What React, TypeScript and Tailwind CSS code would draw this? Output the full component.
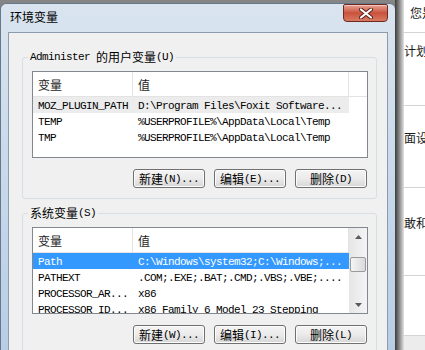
import type { ReactNode } from "react";

const userVars: [string, string][] = [
  ["MOZ_PLUGIN_PATH", "D:\\Program Files\\Foxit Software..."],
  ["TEMP", "%USERPROFILE%\\AppData\\Local\\Temp"],
  ["TMP", "%USERPROFILE%\\AppData\\Local\\Temp"],
];

const sysVars: [string, string][] = [
  ["Path", "C:\\Windows\\system32;C:\\Windows;..."],
  ["PATHEXT", ".COM;.EXE;.BAT;.CMD;.VBS;.VBE;...."],
  ["PROCESSOR_AR...", "x86"],
  ["PROCESSOR_ID...", "x86 Family 6 Model 23 Stepping"],
];

// SimSun-like half-width latin run (6px advance)
function Lt({ children }: { children: ReactNode }) {
  return (
    <span className="font-['Liberation_Mono',monospace] text-[11px] tracking-[-0.6px]">
      {children}
    </span>
  );
}

function Arrow({ up }: { up?: boolean }) {
  return (
    <svg width="7" height="4" viewBox="0 0 7 4">
      <path d={up ? "M0 4 L3.5 0 L7 4 Z" : "M0 0 L3.5 4 L7 0 Z"} fill="#5a5a5a" />
    </svg>
  );
}

function ScrollBar() {
  return (
    <div className="flex w-[18px] shrink-0 flex-col bg-gradient-to-r from-[#e6e6e6] to-[#f4f4f4]">
      <div className="flex h-[17px] items-center justify-center">
        <Arrow up />
      </div>
      <div className="flex-1 px-[1px]">
        <div className="mt-[12px] h-[15px] rounded-[2px] border border-[#9a9a9a] bg-gradient-to-r from-[#f5f5f5] to-[#d9d9d9]" />
      </div>
      <div className="flex h-[17px] items-center justify-center">
        <Arrow />
      </div>
    </div>
  );
}

function ListView({
  rows,
  selected,
  focused,
  scroll,
}: {
  rows: [string, string][];
  selected: number;
  focused?: boolean;
  scroll?: boolean;
}) {
  return (
    <div className="flex h-[87px] overflow-hidden border border-[#828790] bg-white">
      <div className="flex min-w-0 flex-1 flex-col">
        <div className="flex h-[25px] shrink-0 border-b border-[#e3e3e3] text-[#1e1e1e]">
          <div className="flex w-[100px] items-center border-r border-[#e3e3e3] pl-[5px] pt-[1px]">变量</div>
          <div className="flex w-[216px] items-center border-r border-[#e3e3e3] pl-[5px] pt-[1px]">值</div>
          <div className="flex-1" />
        </div>
        {rows.map(([name, value], i) => (
          <div
            key={name}
            className={
              "flex h-[16px] w-[316px] shrink-0 items-center whitespace-nowrap leading-[16px] " +
              (i === selected ? (focused ? "bg-[#3399ff] text-white" : "bg-[#ececec] text-black") : "text-black")
            }
          >
            <div className="w-[100px] overflow-hidden pl-[5px]">
              <Lt>{name}</Lt>
            </div>
            <div className="w-[216px] overflow-hidden pl-[5px]">
              <Lt>{value}</Lt>
            </div>
          </div>
        ))}
      </div>
      {scroll && <ScrollBar />}
    </div>
  );
}

function Btn({ label, key1, dots = true }: { label: string; key1: string; dots?: boolean }) {
  return (
    <button className="flex h-[19px] w-[72px] items-center justify-center rounded-[3px] border border-[#707070] bg-gradient-to-b from-[#f4f4f4] via-[#ebebeb] to-[#d6d6d6] leading-[16px] text-black shadow-[inset_0_0_0_1px_#fcfcfc]">
      {label}
      <Lt>
        ({key1}){dots ? "..." : ""}
      </Lt>
    </button>
  );
}

function Group({
  title,
  latin,
  keyChar,
  className,
  children,
}: {
  title: string;
  latin?: string;
  keyChar: string;
  className?: string;
  children: ReactNode;
}) {
  return (
    <fieldset className={"rounded-[3px] border border-[#d5dfe5] pb-[10px] pl-[9px] pr-[8px] pt-[6px] " + (className ?? "")}>
      <legend className="ml-[-4px] flex h-[16px] items-center whitespace-pre px-[2px] leading-[16px] text-black">
        {latin && <Lt>{latin}</Lt>}
        <span>{title}</span>
        <Lt>({keyChar})</Lt>
      </legend>
      {children}
    </fieldset>
  );
}

function CloseButton() {
  return (
    <div className="flex h-[18px] w-[45px] items-center justify-center rounded-b-[4px] rounded-t-[2px] border border-[#6e2a20] bg-gradient-to-b from-[#e8a395] via-[#c9513c] to-[#d77b62] shadow-[inset_0_1px_0_#f3c6bc]">
      <svg width="14" height="11" viewBox="0 0 14 11">
        <path d="M2 1.5 L12 9.5 M12 1.5 L2 9.5" stroke="#5a2018" strokeWidth="4" strokeLinecap="round" />
        <path d="M2 1.5 L12 9.5 M12 1.5 L2 9.5" stroke="#ffffff" strokeWidth="2.2" strokeLinecap="round" />
      </svg>
    </div>
  );
}

export default function App() {
  return (
    <div className="flex h-[350px] w-[425px] overflow-hidden bg-white font-['Noto_Sans_CJK_SC',sans-serif] text-[12px]">
      {/* dialog window */}
      <div className="flex w-[395px] shrink-0 flex-col bg-[#858585] pt-[3px]">
        <div className="flex flex-1 flex-col rounded-t-[6px] border-l border-t border-[#66788b] bg-gradient-to-b from-[#d9e4ef] to-[#b7cde5] px-[7px]">
          <div className="flex h-[28px] shrink-0 items-start justify-between">
            <div className="pl-[2px] pt-[5px] leading-[16px] text-black">环境变量</div>
            <CloseButton />
          </div>
          <div className="flex-1 border border-[#8d9cad] bg-[#f0f0f0] pl-[13px] pr-[10px] pt-[16px]">
            <Group latin="Administer " title="的用户变量" keyChar="U">
              <ListView rows={userVars} selected={0} />
              <div className="mr-[1px] mt-[11px] flex justify-end gap-[9px]">
                <Btn label="新建" key1="N" />
                <Btn label="编辑" key1="E" />
                <Btn label="删除" key1="D" dots={false} />
              </div>
            </Group>
            <Group title="系统变量" keyChar="S" className="mt-[6px]">
              <ListView rows={sysVars} selected={0} focused scroll />
              <div className="mr-[1px] mt-[11px] flex justify-end gap-[9px]">
                <Btn label="新建" key1="W" />
                <Btn label="编辑" key1="I" />
                <Btn label="删除" key1="L" dots={false} />
              </div>
            </Group>
          </div>
        </div>
      </div>
      {/* drop shadow */}
      <div className="w-[9px] shrink-0 bg-gradient-to-r from-[#3c3c3c] via-[#8c8c8c] to-[#e4e4e4]" />
      {/* window behind */}
      <div className="flex min-w-0 flex-1 flex-col overflow-hidden whitespace-nowrap text-[#1a1a1a]">
        <div className="h-[33px] shrink-0 border-b border-[#d4d4d4] pl-[6px] pt-[5px] leading-[16px]">您是</div>
        <div className="h-[73px] shrink-0 border-b border-[#d4d4d4] pt-[10px] leading-[16px]">计划</div>
        <div className="h-[82px] shrink-0 border-b border-[#d4d4d4] pt-[24px] leading-[16px]">面设</div>
        <div className="h-[88px] shrink-0 border-b border-[#d4d4d4] pt-[27px] leading-[16px]">敢和</div>
        <div className="h-[60px] shrink-0 border-b border-[#d4d4d4]" />
        <div className="flex-1 bg-[#ececec]" />
      </div>
    </div>
  );
}
